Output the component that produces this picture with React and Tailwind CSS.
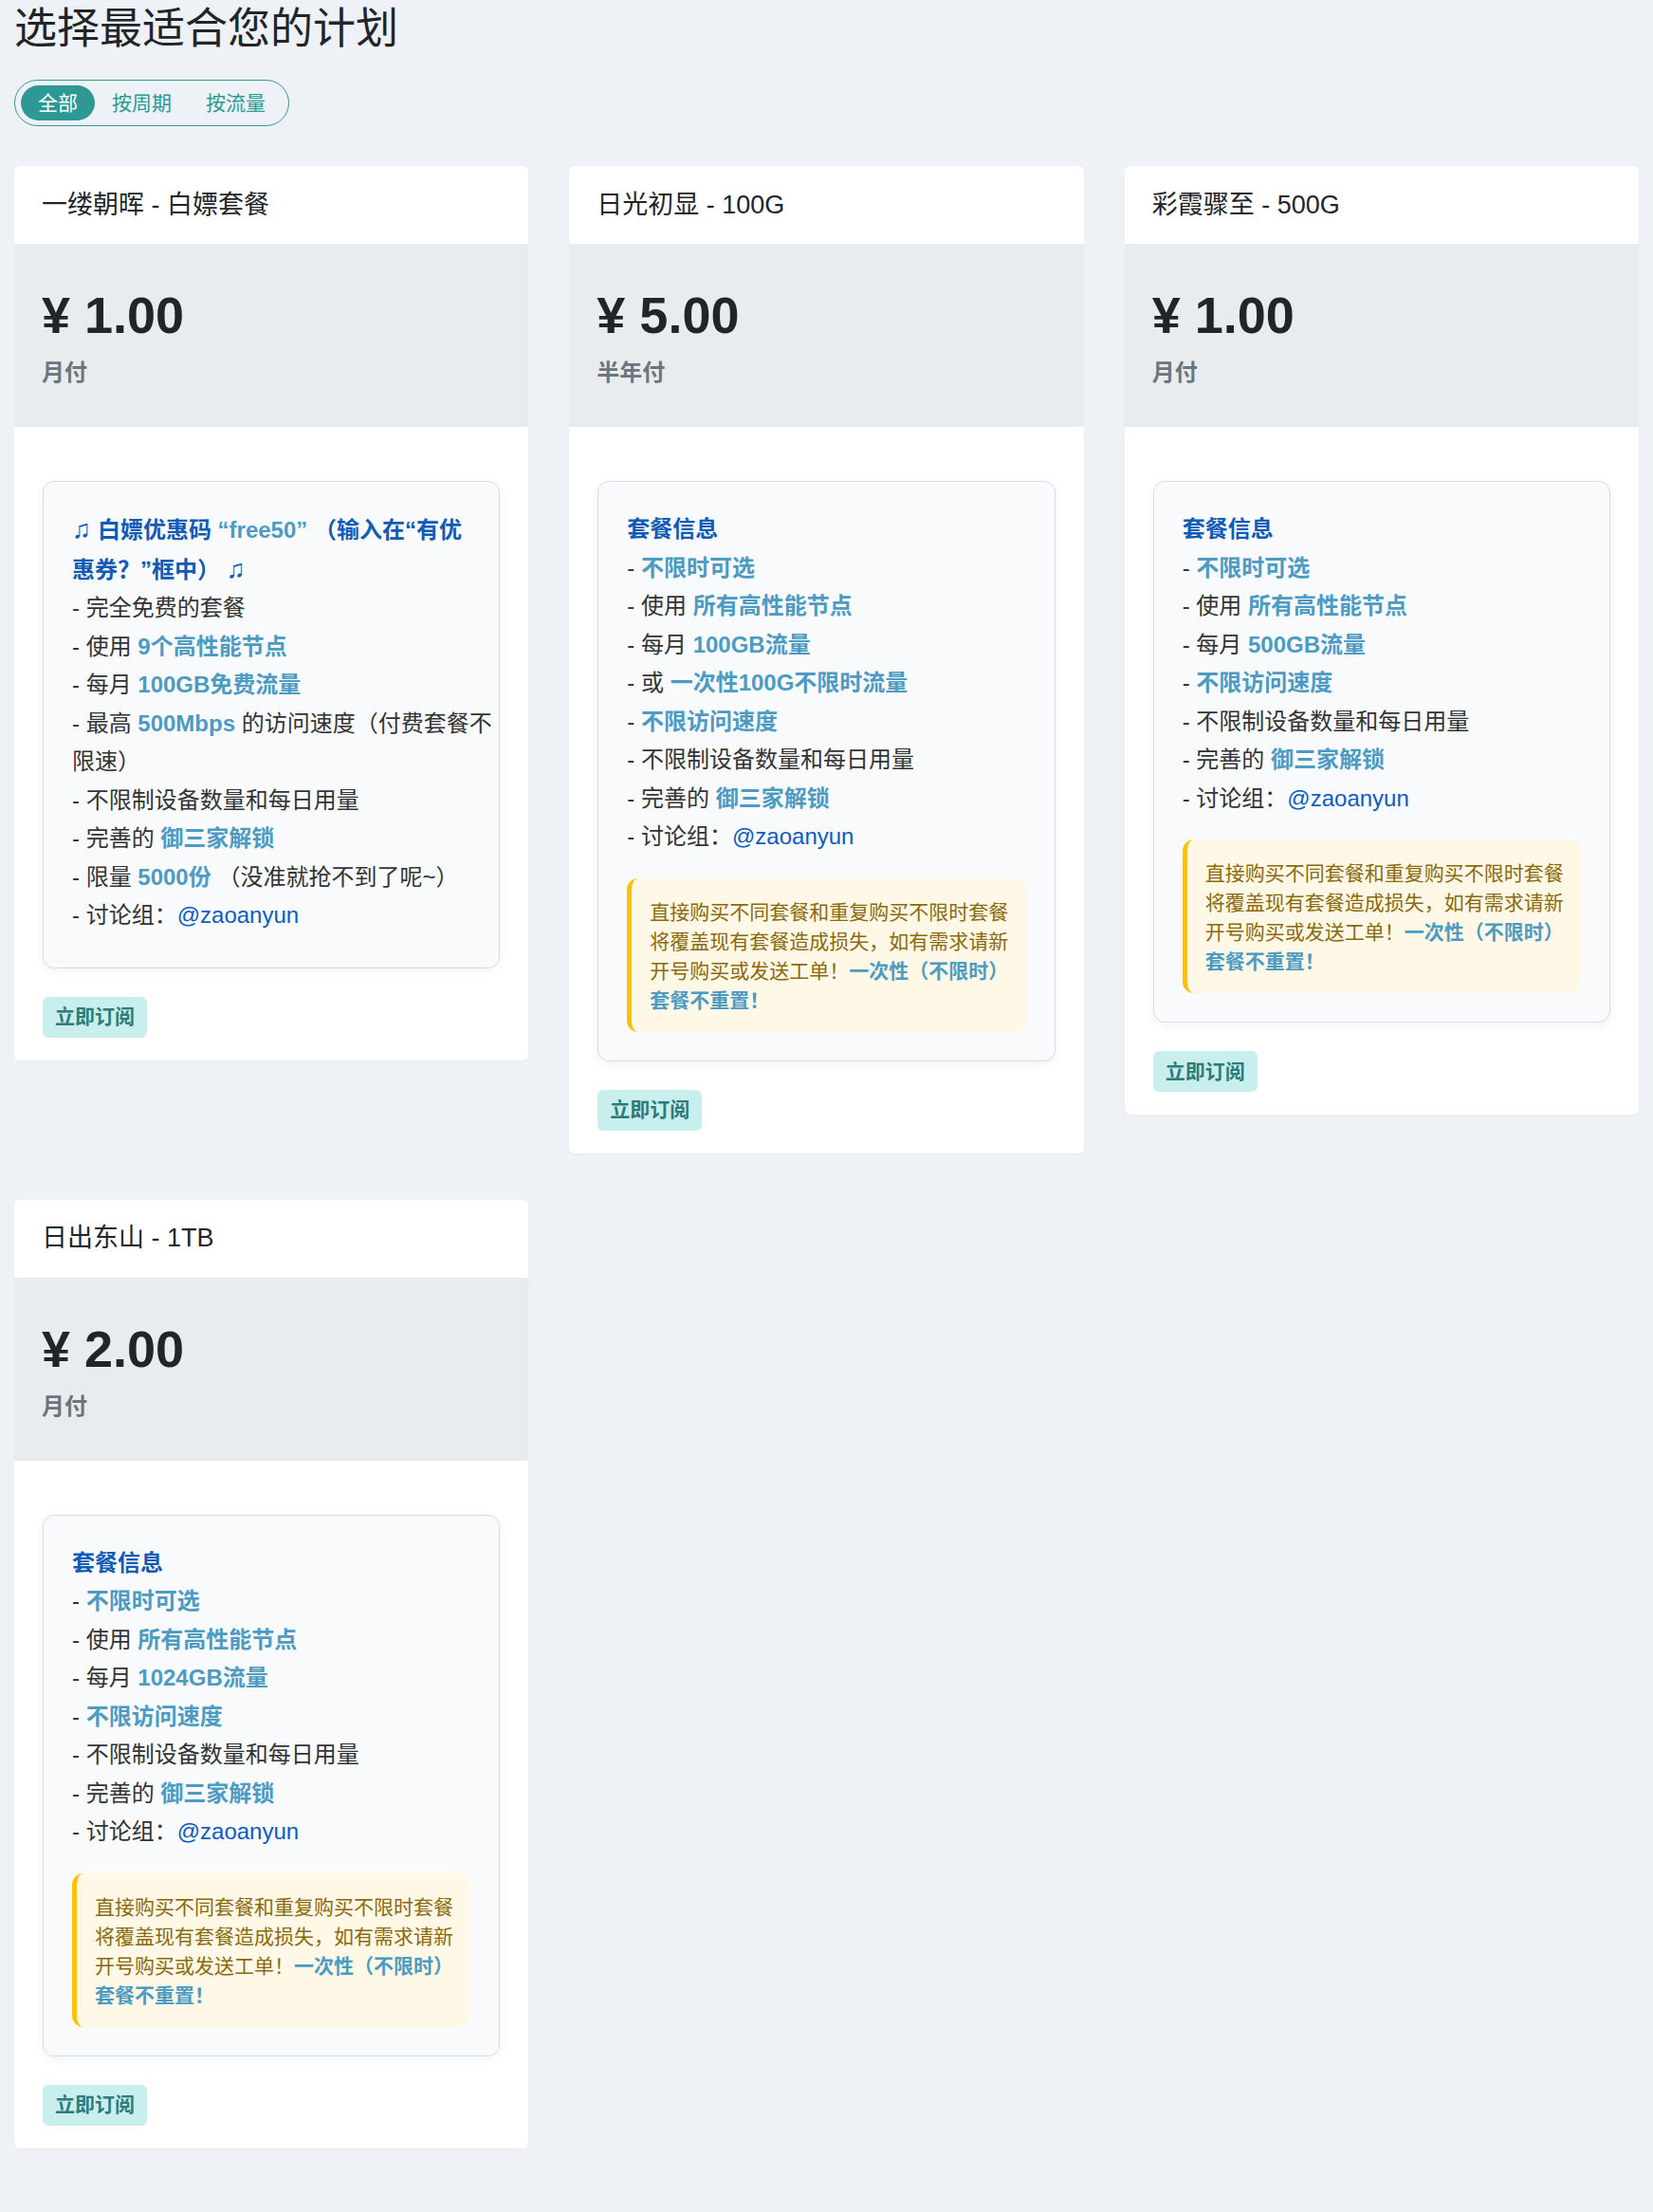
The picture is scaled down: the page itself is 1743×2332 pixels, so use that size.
import { useState } from 'react';

function Hl({ children }) {
  return <span className="font-bold text-[#4d9bc2]">{children}</span>;
}

function At() {
  return <span className="text-[#0d5cc0]">@zaoanyun</span>;
}

function Notice() {
  return (
    <div className="mt-[23px] rounded-[12px] border-l-[5px] border-[#ffc107] bg-[#fff8e6] pt-[20px] pb-[18px] pl-[19px] pr-[10px] text-[21px] leading-[31px] text-[#8a6a0a]">
      <div className="whitespace-nowrap">直接购买不同套餐和重复购买不限时套餐</div>
      <div className="whitespace-nowrap">将覆盖现有套餐造成损失，如有需求请新</div>
      <div className="whitespace-nowrap">
        开号购买或发送工单！<Hl>一次性（不限时）</Hl>
      </div>
      <div className="whitespace-nowrap">
        <Hl>套餐不重置！</Hl>
      </div>
    </div>
  );
}

const plans = [
  {
    name: '一缕朝晖 - 白嫖套餐',
    price: '¥ 1.00',
    period: '月付',
    notice: false,
    lines: (
      <>
        <div className="whitespace-nowrap font-bold text-[#0f5bb5]">
          <span className="text-[27px]">♫</span> 白嫖优惠码 <span className="text-[#4d9bc2]">“free50”</span> （输入在“有优
        </div>
        <div className="whitespace-nowrap font-bold text-[#0f5bb5]">
          惠券？”框中） <span className="text-[27px]">♫</span>
        </div>
        <div>- 完全免费的套餐</div>
        <div>- 使用 <Hl>9个高性能节点</Hl></div>
        <div>- 每月 <Hl>100GB免费流量</Hl></div>
        <div className="whitespace-nowrap">
          - 最高 <Hl>500Mbps</Hl> 的访问速度（付费套餐不
        </div>
        <div>限速）</div>
        <div>- 不限制设备数量和每日用量</div>
        <div>- 完善的 <Hl>御三家解锁</Hl></div>
        <div>- 限量 <Hl>5000份</Hl> （没准就抢不到了呢~）</div>
        <div>- 讨论组：<At /></div>
      </>
    ),
  },
  {
    name: '日光初显 - 100G',
    price: '¥ 5.00',
    period: '半年付',
    notice: true,
    lines: (
      <>
        <div className="font-bold text-[#0f5bb5]">套餐信息</div>
        <div>- <Hl>不限时可选</Hl></div>
        <div>- 使用 <Hl>所有高性能节点</Hl></div>
        <div>- 每月 <Hl>100GB流量</Hl></div>
        <div>- 或 <Hl>一次性100G不限时流量</Hl></div>
        <div>- <Hl>不限访问速度</Hl></div>
        <div>- 不限制设备数量和每日用量</div>
        <div>- 完善的 <Hl>御三家解锁</Hl></div>
        <div>- 讨论组：<At /></div>
      </>
    ),
  },
  {
    name: '彩霞骤至 - 500G',
    price: '¥ 1.00',
    period: '月付',
    notice: true,
    lines: (
      <>
        <div className="font-bold text-[#0f5bb5]">套餐信息</div>
        <div>- <Hl>不限时可选</Hl></div>
        <div>- 使用 <Hl>所有高性能节点</Hl></div>
        <div>- 每月 <Hl>500GB流量</Hl></div>
        <div>- <Hl>不限访问速度</Hl></div>
        <div>- 不限制设备数量和每日用量</div>
        <div>- 完善的 <Hl>御三家解锁</Hl></div>
        <div>- 讨论组：<At /></div>
      </>
    ),
  },
  {
    name: '日出东山 - 1TB',
    price: '¥ 2.00',
    period: '月付',
    notice: true,
    lines: (
      <>
        <div className="font-bold text-[#0f5bb5]">套餐信息</div>
        <div>- <Hl>不限时可选</Hl></div>
        <div>- 使用 <Hl>所有高性能节点</Hl></div>
        <div>- 每月 <Hl>1024GB流量</Hl></div>
        <div>- <Hl>不限访问速度</Hl></div>
        <div>- 不限制设备数量和每日用量</div>
        <div>- 完善的 <Hl>御三家解锁</Hl></div>
        <div>- 讨论组：<At /></div>
      </>
    ),
  },
];

function PlanCard({ plan }) {
  return (
    <div className="overflow-hidden rounded-[6px] bg-white shadow-[0_1px_2px_rgba(0,0,0,0.03)]">
      <div className="flex h-[82px] items-center px-[29px] text-[27px] text-[#212529]">{plan.name}</div>
      <div className="bg-[#e9ecef] px-[29px] pt-[48px] pb-[45px]">
        <div className="text-[54px] font-bold leading-none text-[#212529]">{plan.price}</div>
        <div className="mt-[22px] text-[24px] font-bold leading-none text-[#6c757d]">{plan.period}</div>
      </div>
      <div className="px-[30px] pt-[57px] pb-[24px]">
        <div className="rounded-[12px] border border-[#d5dce6] bg-[#f8fafc] p-[30px] shadow-[0_3px_10px_rgba(30,50,90,0.06)]">
          <div className="mb-[4px] text-[24px] leading-[40.5px] text-[#333]">{plan.lines}</div>
          {plan.notice && <Notice />}
        </div>
        <button className="mt-[30px] h-[43px] rounded-[6px] bg-[#c8eeee] px-[13px] text-[21px] font-bold text-[#2b7c7a]">
          立即订阅
        </button>
      </div>
    </div>
  );
}

export default function App() {
  const [tab, setTab] = useState('all');
  const tabs = [
    { key: 'all', label: '全部' },
    { key: 'period', label: '按周期' },
    { key: 'traffic', label: '按流量' },
  ];

  return (
    <div className="min-h-screen bg-[#eef2f7] px-[15px] pb-[60px] font-['Liberation_Sans','Noto_Sans_CJK_SC',sans-serif]">
      <h1 className="text-[45px] leading-[62px] text-[#212529]">选择最适合您的计划</h1>

      <div className="mt-[22px] inline-flex rounded-full border border-[#2e9a95] px-[6px] py-[5px]">
        {tabs.map((t) => (
          <button
            key={t.key}
            onClick={() => setTab(t.key)}
            className={`h-[37px] rounded-full px-[18px] text-[21px] ${
              tab === t.key ? 'bg-[#2e9994] text-white' : 'text-[#2e9a95]'
            }`}
          >
            {t.label}
          </button>
        ))}
      </div>

      <div className="mt-[42px] grid grid-cols-3 items-start gap-x-[43px] gap-y-[49px]">
        {plans.map((p) => (
          <PlanCard key={p.name} plan={p} />
        ))}
      </div>
    </div>
  );
}
